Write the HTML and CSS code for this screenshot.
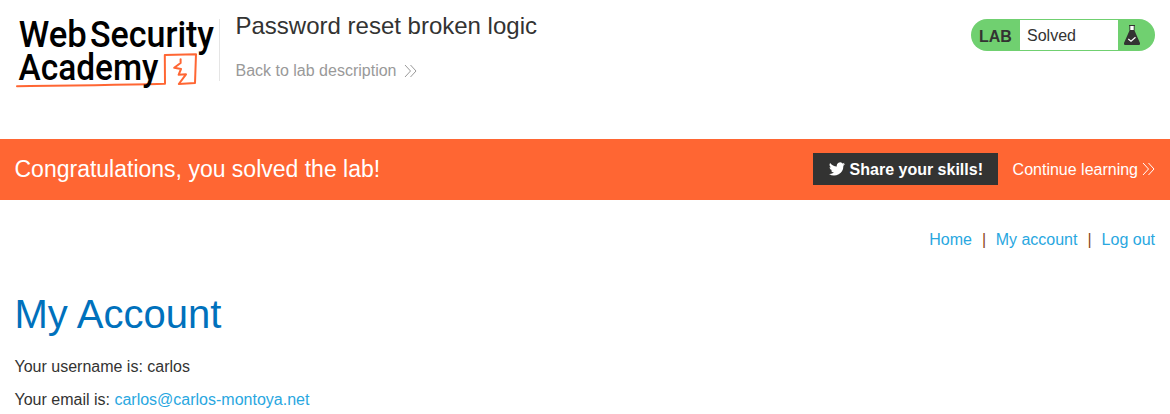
FILE: index.html
```html
<!DOCTYPE html>
<html lang="en">
<head>
<meta charset="utf-8">
<title>Password reset broken logic</title>
<link rel="stylesheet" href="styles.css">
</head>
<body>
<header class="lab-header">
  <svg class="logo" width="205" height="80" viewBox="15 14 205 80" role="img" aria-label="Web Security Academy">
    <path class="logo-line" d="M17 86.3 L30 86 Q55 85.800 95 85.2 T165 83.800 L164.800 55 L196 54.200 L195 83 L178.800 84 L186 74.300 L178.600 74.800 L181 69 L174.200 67.800 L180.600 63 L180.600 59.200"/>
    <g class="logo-text">
      <text x="18.8" y="47.3" textLength="68" lengthAdjust="spacingAndGlyphs">Web</text>
      <text x="90" y="47.3" textLength="124" lengthAdjust="spacingAndGlyphs">Security</text>
      <text x="18.5" y="79.8" textLength="140" lengthAdjust="spacingAndGlyphs">Academy</text>
    </g>
  </svg>
  <div class="title">
    <h2 class="lab-title">Password reset broken logic</h2>
    <a class="back">Back to lab description
      <svg class="chevrons" width="13" height="14" viewBox="0 0 13 14"><path d="M1 1 L6.5 7 L1 13 M6.5 1 L12 7 L6.5 13"/></svg>
    </a>
  </div>
  <div class="status">
    <span class="status-lab">LAB</span>
    <p class="status-text">Solved</p>
    <svg class="flask" width="16" height="20" viewBox="0 0 16 20">
      <path fill="#fff" d="M6 1h4v5H6z"/>
      <path fill="#333332" d="M5 0h6v1H5zM5.4 1h.9v4h3.4V1h.9v4.800L16 18q.2 2-1 2H1q-1.200 0-1-2L5.400 5.800z"/>
      <path fill="none" stroke="#fff" stroke-width="1.2" d="M4.3 14 L7 16.3 L11.5 12.2"/>
    </svg>
  </div>
</header>
<section class="banner">
  <h4 class="banner-title">Congratulations, you solved the lab!</h4>
  <a class="share">
    <svg width="16" height="14" viewBox="0 0 24 20" fill="#fff"><path d="M24 2.4a10 10 0 0 1-2.8.8A5 5 0 0 0 23.3.5a10 10 0 0 1-3.1 1.2 4.9 4.9 0 0 0-8.4 4.5A14 14 0 0 1 1.7 1a4.9 4.9 0 0 0 1.5 6.6A5 5 0 0 1 1 7a4.9 4.9 0 0 0 4 4.9 5 5 0 0 1-2.2.1 4.9 4.9 0 0 0 4.6 3.4A9.900 9.900 0 0 1 0 17.500 14 14 0 0 0 21.500 5a10 10 0 0 0 2.500-2.600z"/></svg>
    <span>Share your skills!</span>
  </a>
  <a class="continue">Continue learning
    <svg class="chevrons" width="13" height="14" viewBox="0 0 13 14"><path d="M1 1 L6.5 7 L1 13 M6.5 1 L12 7 L6.5 13"/></svg>
  </a>
</section>
<main class="content">
  <nav class="links"><a>Home</a><span>|</span><a>My account</a><span>|</span><a>Log out</a></nav>
  <h1 class="heading">My Account</h1>
  <p class="line">Your username is: carlos</p>
  <p class="line">Your email is: <a>carlos@carlos-montoya.net</a></p>
</main>
</body>
</html>
```
FILE: styles.css
```css
* { box-sizing: border-box; }
body {
  margin: 0;
  height: 414px;
  overflow: hidden;
  background: #fff;
  color: #333332;
  font: 16px/19px "Liberation Sans", Arial, sans-serif;
}
h1, h2, h4, p { margin: 0; font-weight: 400; }
.lab-header {
  display: flex;
  align-items: flex-start;
  height: 139px;
  padding: 14px 15px 0;
}
.logo { flex: none; display: block; overflow: visible; }
.logo-line { fill: none; stroke: #ff6633; stroke-width: 2; stroke-linejoin: round; stroke-linecap: round; }
.logo-text { font: 500 37.5px Roboto, sans-serif; fill: #000; }
.title {
  height: 62px;
  margin-top: 5px;
  margin-left: -1px;
  padding-left: 15.5px;
  border-left: 1px solid #e5e5e5;
}
.lab-title { font-size: 24px; line-height: 28px; margin-top: -7px; }
.back {
  display: flex;
  align-items: center;
  gap: 8px;
  margin-top: 21px;
  color: #999;
}
.chevrons { fill: none; stroke: currentColor; stroke-width: 1; }
.status {
  display: flex;
  align-items: center;
  width: 184px;
  height: 32px;
  margin: 5px 0 0 auto;
  padding: 1px 15px 1px 8px;
  border-radius: 16px;
  background: #70d070;
}
.status-lab { width: 41px; padding-top: 2px; font-weight: 700; }
.status-text {
  width: 98px;
  height: 30px;
  padding-left: 7px;
  background: #fff;
  line-height: 31px;
}
.flask { margin-left: auto; }
.banner {
  display: flex;
  align-items: center;
  height: 61px;
  padding: 0 15px 1px 14.5px;
  background: #ff6633;
  color: #fff;
}
.banner-title { font-size: 23px; line-height: 28px; }
.share {
  display: flex;
  align-items: center;
  gap: 5px;
  width: 185px;
  height: 32px;
  margin: 0 15px 0 auto;
  padding-left: 16px;
  background: #333332;
  font-weight: 700;
}
.continue { display: flex; align-items: center; gap: 4px; }
.content { padding: 30px 15px 0 14.5px; }
.links { display: flex; justify-content: flex-end; gap: 10px; }
.content a { color: #29a7df; }
.links span { color: #8a4a20; }
.links span:first-of-type { margin-right: -.5px; }
.heading { margin: 41px 0 19px; color: #0071bc; font-size: 40px; line-height: 48px; }
.line { height: 19px; margin-bottom: 14px; }
```
